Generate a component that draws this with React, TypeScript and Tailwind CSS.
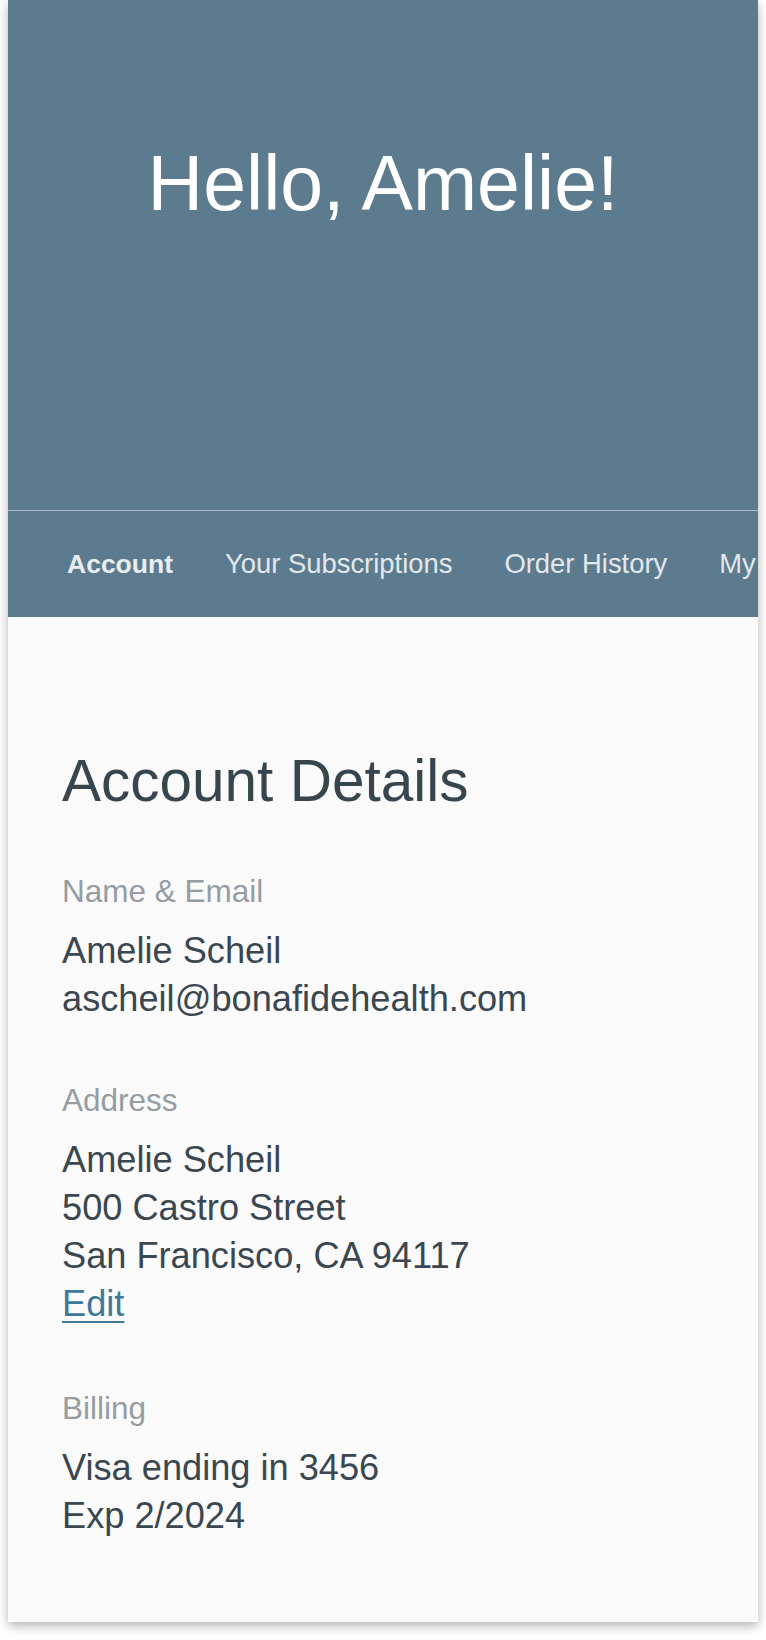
const tabs = ['Account', 'Your Subscriptions', 'Order History', 'My Products'];

function Section({ label, lines, edit, className }: { label: string; lines: string[]; edit?: boolean; className?: string }) {
  return (
    <div className={className}>
      <div className="text-[31.5px] leading-[40px] text-[#959da3]">{label}</div>
      <div className="mt-[16px] text-[36.2px] leading-[48px] text-[#3a4750]">
        {lines.map((line) => (
          <div key={line}>{line}</div>
        ))}
        {edit && (
          <a href="#" className="block w-fit text-[#40789a] underline decoration-2 underline-offset-[5px]">
            Edit
          </a>
        )}
      </div>
    </div>
  );
}

export default function App() {
  return (
    <div className="min-h-[1640px] bg-white pb-4 font-['Liberation_Sans',Arial,sans-serif]">
      <div className="mx-2 overflow-hidden bg-[#fafafa] shadow-[0_4px_10px_rgba(0,0,0,0.3)]">
        <header className="h-[511px] border-b border-[#a9bcc7] bg-[#5c7b8e] pt-[145px] text-center">
          <h1 className="text-[77px] leading-[77px] text-white">Hello, Amelie!</h1>
        </header>

        <nav className="flex h-[106px] items-center gap-[52px] overflow-hidden whitespace-nowrap bg-[#5c7b8e] pl-[59px] text-[27.4px] leading-[36px]">
          {tabs.map((tab, i) => (
            <span key={tab} className={i === 0 ? 'text-[26.5px] font-bold text-[#e9edef]' : 'text-[#e2e8ec]'}>
              {tab}
            </span>
          ))}
        </nav>

        <main className="pl-[54px] pr-14 pt-[129px] pb-[82px]">
          <h2 className="text-[58.5px] leading-[70px] text-[#37454e]">Account Details</h2>
          <Section className="mt-[55px]" label="Name & Email" lines={['Amelie Scheil', 'ascheil@bonafidehealth.com']} />
          <Section
            className="mt-[57px]"
            label="Address"
            lines={['Amelie Scheil', '500 Castro Street', 'San Francisco, CA 94117']}
            edit
          />
          <Section className="mt-[60px]" label="Billing" lines={['Visa ending in 3456', 'Exp 2/2024']} />
        </main>
      </div>
    </div>
  );
}
